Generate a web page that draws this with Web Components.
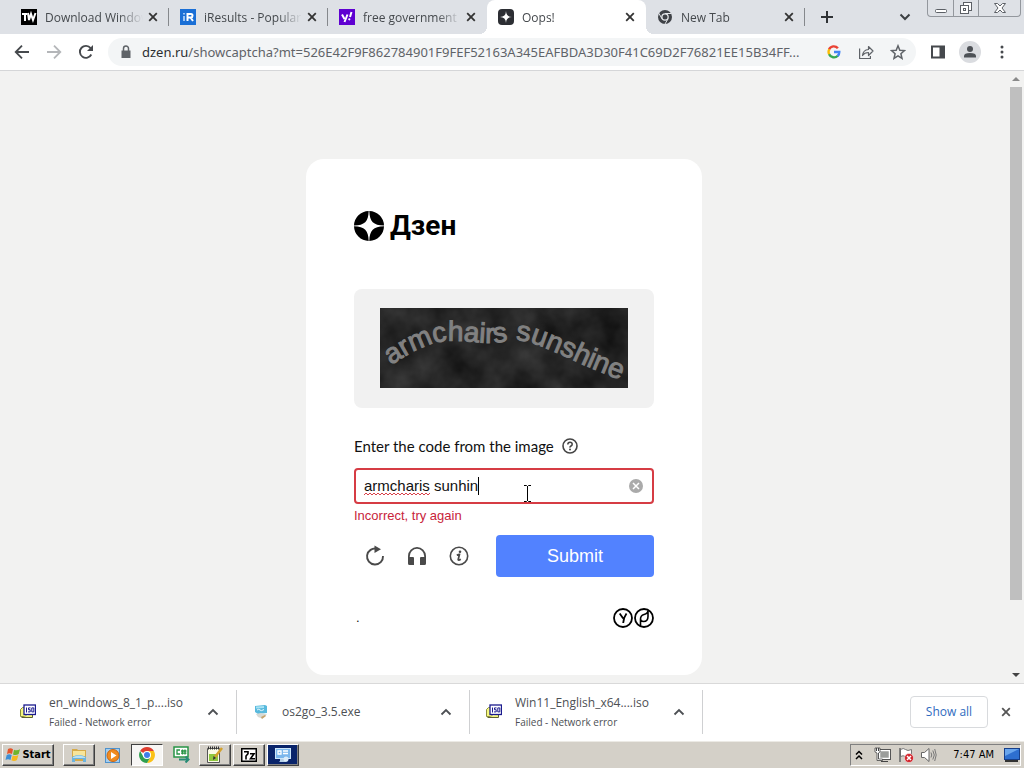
<!DOCTYPE html>
<html lang="en">
<head>
<meta charset="utf-8">
<meta name="viewport" content="width=device-width, initial-scale=1">
<title>Oops!</title>
<style>
    html, body {
        height: 100%;
        margin: 0;
    }
    body {
        display: flex;
        flex-direction: column;
        overflow: hidden;
        font-family: "Open Sans", "Noto Sans", sans-serif;
        font-size: 12px;
        color: #3c4043;
        background: #fff;
    }
    page-view {
        flex: 1;
        min-height: 0;
    }
</style>
</head>
<body>
    <tab-strip>
        <browser-tab icon="tw">Download Windows</browser-tab>
        <browser-tab icon="ir">iResults - Popular</browser-tab>
        <browser-tab icon="yahoo">free government cell</browser-tab>
        <browser-tab icon="zen" active>Oops!</browser-tab>
        <browser-tab icon="chromeGrey">New Tab</browser-tab>
    </tab-strip>
    <address-bar></address-bar>
    <page-view>
        <captcha-card></captcha-card>
    </page-view>
    <download-bar>
        <download-item icon="iso" status="Failed - Network error">en_windows_8_1_p....iso</download-item>
        <download-item icon="installer">os2go_3.5.exe</download-item>
        <download-item icon="iso" status="Failed - Network error">Win11_English_x64....iso</download-item>
    </download-bar>
    <task-bar></task-bar>

<script>
const svg = (w, h, body, box) =>
    `<svg width="${w}" height="${h}" viewBox="${box || `0 0 ${w} ${h}`}" aria-hidden="true">${body}</svg>`;

const chromeLogo = (red, yellow, green, blue) => `
    <path fill="${red}" d="M8 8 1.1 4A8 8 0 0 1 14.9 4H8z"/>
    <path fill="${yellow}" d="M8 8V4h6.9A8 8 0 0 1 8 16l3.5-6z"/>
    <path fill="${green}" d="M8 8l3.5 2L8 16A8 8 0 0 1 1.1 4l3.4 6z"/>
    <circle cx="8" cy="8" r="4" fill="#fff"/>
    <circle cx="8" cy="8" r="3" fill="${blue}"/>`;

const ICONS = {
    // tab favicons
    tw: svg(16, 16, `<rect width="16" height="16" fill="#000"/><path fill="none" stroke="#fff" stroke-width="2" d="M1 5h5M4 4v8M7 4l1 7 2-6 2 6 2.500-7"/>`),
    ir: svg(16, 16, `<rect width="16" height="16" fill="#1a6fd6"/><path stroke="#9cc5f5" stroke-width="2" d="M4 7v5M4 4v1.500"/><path fill="none" stroke="#fff" stroke-width="2" d="M7.500 12V5H11q1.500 0 1.500 1.700T11 8.500H8M10.500 8.500l2.500 3.500"/>`),
    yahoo: svg(16, 16, `<rect width="16" height="16" fill="#5f01d1"/><path fill="none" stroke="#fff" stroke-width="2" d="M3 5.500l2.500 4.500M8.500 5.500l-3 7.500M12.500 3l-1.500 5"/><circle cx="10.300" cy="10.300" r="1.100" fill="#fff"/>`),
    zen: svg(16, 16, `<rect width="16" height="16" rx="4" fill="#2c2e33"/><path fill="#fff" d="M8 2q.2 5.800 6 6-5.800.2-6 6-.2-5.800-6-6 5.800-.2 6-6z"/>`),
    chromeGrey: svg(16, 16, `<circle cx="8" cy="8" r="7" fill="#3f4247"/><path stroke="#e3e5e8" stroke-width="1" d="M8 4.500h6.300M5 9.800 1.800 4.200M11 9.800 8 15"/><circle cx="8" cy="8" r="3.800" fill="#e3e5e8"/><circle cx="8" cy="8" r="2.500" fill="#3f4247"/>`),

    // browser chrome
    close: svg(16, 16, `<path stroke="currentColor" stroke-width="1.800" d="M4.200 4.200l7.600 7.600M11.800 4.200l-7.600 7.600"/>`),
    plus: svg(16, 16, `<path stroke="currentColor" stroke-width="2" d="M8 2v12M2 8h12"/>`),
    chevronDown: svg(14, 14, `<path fill="none" stroke="currentColor" stroke-width="2" d="M2.500 4.500 7 9l4.500-4.500"/>`),
    chevronUp: svg(14, 14, `<path fill="none" stroke="currentColor" stroke-width="1.800" d="M2.500 9.500 7 5l4.500 4.500"/>`),
    back: svg(16, 16, `<path fill="none" stroke="currentColor" stroke-width="1.800" d="M15 8H2M8 1.700 1.700 8 8 14.300"/>`),
    forward: svg(16, 16, `<path fill="none" stroke="currentColor" stroke-width="1.800" d="M1 8h13M8 1.700 14.300 8 8 14.300"/>`),
    reload: svg(16, 16, `<path fill="none" stroke="currentColor" stroke-width="1.900" d="M13.300 10.500A6 6 0 1 1 12.600 4.100"/><path fill="currentColor" d="M15 1v6H9z"/>`),
    lock: svg(16, 16, `<path fill="currentColor" d="M3.500 6.500h9V14h-9z"/><path fill="none" stroke="currentColor" stroke-width="1.500" d="M5.500 7V4.500a2.500 2.500 0 0 1 5 0V7"/>`),
    google: svg(14, 14, `<g fill="none" stroke-width="2.400"><path stroke="#ea4335" d="M2 4.400A5.300 5.300 0 0 1 10.900 3.300"/><path stroke="#fbbc05" d="M2.300 9.500a5.300 5.300 0 0 1 0-5.200"/><path stroke="#34a853" d="M10.800 10.700A5.300 5.300 0 0 1 2.100 9.200"/><path stroke="#4285f4" d="M7 7h5.300a5.300 5.300 0 0 1-1.700 4"/></g>`),
    share: svg(16, 16, `<g fill="none" stroke="currentColor" stroke-width="1.200"><path d="M1.600 4.500v10h10.800V12"/><path stroke-linejoin="round" d="M4.500 11.500q.5-5.500 6-6V2.500l4.500 4.500-4.500 4.500V8.500q-4 0-6 3z"/></g>`),
    star: svg(16, 16, `<path fill="none" stroke="currentColor" stroke-width="1.500" d="M8 1.800l1.800 4.400 4.700.4-3.600 3.100 1.100 4.600L8 11.800l-4 2.500 1.100-4.600L1.500 6.600l4.700-.4z"/>`),
    panel: svg(16, 16, `<path fill="currentColor" d="M1 1.500h14v13H1zM3 3.500v9h6.500v-9z" fill-rule="evenodd"/>`),
    avatar: svg(24, 24, `<circle cx="12" cy="12" r="11" fill="#dadce0"/><circle cx="12" cy="9" r="3" fill="#4d5156"/><path fill="#4d5156" d="M6 17.500V16q0-3 6-3t6 3v1.500z"/>`),
    dots: svg(16, 16, `<g fill="currentColor"><circle cx="8" cy="3" r="1.500"/><circle cx="8" cy="8" r="1.500"/><circle cx="8" cy="13" r="1.500"/></g>`),
    minimize: svg(14, 14, `<rect x="1.500" y="8.500" width="11" height="3" rx="1" fill="#fff" stroke="#5c6066"/>`),
    restore: svg(14, 14, `<g fill="#fff" stroke="#5c6066"><rect x="4.500" y="1.500" width="8" height="8"/><rect x="1.500" y="4.500" width="8" height="8"/><rect x="4.500" y="7.500" width="2" height="2"/></g>`),
    winClose: svg(14, 14, `<path fill="#fff" stroke="#5c6066" d="M1.500 2.500h3L7 5l2.500-2.500h3L9 7l3.500 4.500h-3L7 9l-2.500 2.500h-3L5 7z"/>`),

    // captcha form
    zenLogo: svg(32, 32, `<path d="M14.700 1A15 15 0 0 0 0 15.600C10.800 15.200 14.300 11.700 14.700 1zM15.300 1A15 15 0 0 1 30 15.600C19.200 15.200 15.700 11.700 15.300 1zM14.700 31A15 15 0 0 1 0 16.300C10.800 16.700 14.300 20.300 14.700 31zM15.300 31A15 15 0 0 0 30 16.300C19.200 16.700 15.700 20.300 15.300 31z"/>`),
    help: svg(16, 16, `<g fill="none" stroke="#444"><circle cx="8" cy="8" r="7" stroke-width="1.600"/><path stroke-width="1.500" d="M5.800 6.600q0-2.300 2.200-2.300t2.200 2q0 1.100-1.200 1.700T8 9.700"/></g><circle cx="8" cy="11.600" r="1" fill="#444"/>`),
    clear: svg(16, 16, `<circle cx="8" cy="8" r="7" fill="#aaa"/><path stroke="#fff" stroke-width="1.500" d="M5 5l6 6M11 5l-6 6"/>`),
    refresh: svg(24, 24, `<path fill="none" stroke="currentColor" stroke-width="1.900" d="M14 4.800A8 8 0 1 0 20 12"/><path fill="currentColor" d="M11.500 1.500l6.500 3.800-6.500 3.700z"/>`),
    headphones: svg(24, 24, `<path fill="none" stroke="currentColor" stroke-width="1.800" d="M3.900 14v-2a8.100 8.100 0 0 1 16.200 0v2"/><path fill="currentColor" d="M3 13h5q1 0 1 1v7H4.500Q3 21 3 19.500zM21 13h-5q-1 0-1 1v7h4.500q1.500 0 1.500-1.500z"/>`),
    info: svg(24, 24, `<circle cx="12" cy="12" r="8.700" fill="none" stroke="currentColor" stroke-width="1.600"/><circle cx="13" cy="7.700" r="1.300" fill="currentColor"/><path fill="none" stroke="currentColor" stroke-width="1.700" d="M9.800 11.200q2-1 2.700-.8l-1.300 5.100q-.2 1.300 2.600-.3"/>`),
    partners: svg(42, 20, `<g fill="none" stroke="#000" stroke-width="1.800"><circle cx="11" cy="10" r="9"/><circle cx="32" cy="10" r="9"/><path d="M7.700 5.500l3.500 5M14.500 5.500q-3 4-3.300 9.500"/><path stroke-width="1.600" d="M36 2.500v6q0 5-4.500 5-3 0-3-2.500 0-3.500 3.500-4.500 4-1.200 4-4M28.500 11v7"/></g>`),

    // downloads
    iso: svg(16, 16, `<path fill="#f6f87e" stroke="#8a8d3c" d="M.5 12.500V5.500L2.500 3.500H6v9z"/><path fill="#f6f87e" stroke="#5f6130" d="M1.500 13.500h11V10"/><rect x="4" y="1" width="11.500" height="9.500" fill="#fff" stroke="#1b1b8e" stroke-width="1.300"/><path fill="none" stroke="#1b1b8e" d="M6.500 3.500v5M10.500 3.900H8.500v1.800h1.700v2.200H8M11.800 3.900h2v4h-2z"/>`),
    installer: svg(16, 16, `<path fill="#58b9dd" d="M2 2l10-1 2 1v7l-9 1-3-2z"/><path fill="#a7e2f3" d="M3 2.500l8-.5v2l-8 .5z"/><path fill="none" stroke="#e9fbff" d="M4 6q2-1.500 3 0t4-.5"/><path fill="#d7d9d4" d="M3 10l5-1 6 1.500-5 4L5 13z"/><path fill="#c6a36c" d="M8 13l4-2 1 1-4 3z"/>`),

    // taskbar
    windows: svg(17, 17, `<path fill="#e5552b" d="M3 3q2.500-1.500 5 .2L7 8q-2.500-1.500-5 0z"/><path fill="#6fb52c" d="M9 3.700q3 1.500 6-.5L13.700 8q-3 1.800-5.700.4z"/><path fill="#3c8fd6" d="M1.700 9q2.500-1.500 5 0l-1.200 5q-2.500-1.500-5 0z"/><path fill="#f6b91d" d="M7.700 9.400q3 1.500 5.700-.3L12 14q-2.700 1.700-5.600.3z"/>`),
    explorer: svg(16, 16, `<path fill="#d6aa49" d="M1 2h5l1 1h8v11H1z"/><path fill="#f8e59a" d="M2 4h12v5H2z"/><path fill="#6bb4df" d="M1 10q7-4 14 0v5h-3v-3H4v3H1z"/><path fill="#b9e0f4" d="M2 10q6-3 12 0v1H2z"/>`),
    media: svg(16, 16, `<path fill="#4f92cc" d="M0 1h15v15H0z"/><path fill="#a5cdec" d="M1 2h13v13H1z"/><circle cx="8" cy="8.500" r="6" fill="#f08b20" stroke="#c96512"/><path fill="#fff" d="M6 5l5.500 3.500L6 12z"/>`),
    chrome: svg(16, 16, chromeLogo('#df3e2f', '#fbc116', '#2f9f4f', '#3f7fe8')),
    csharp: svg(17, 17, `<rect x="1" y="1" width="14" height="10" fill="#fff" stroke="#279445" stroke-width="1.500"/><path fill="none" stroke="#279445" stroke-width="1.300" d="M7 4H4v4h3M9.500 3.500v5M12 3.500v5M8 5h5.500M8 7.200h5.500"/><path fill="none" stroke="#278b75" stroke-width="2" d="M6 13.500h9M12.500 10.500l3 3-3 3"/>`),
    notepad: svg(18, 18, `<path fill="#fbfbe6" stroke="#555" d="M1.500 2.500h12v14h-12z"/><path stroke="#333" stroke-dasharray="1 1" stroke-width="3" d="M2 2h11"/><path fill="#8fc83e" d="M3 8h9v7H3z"/><path stroke="#d3a12c" stroke-width="2.500" d="M9 11l7-9"/><path fill="#333" d="M7 14l.5-4 2.500 2z"/>`),
    sevenZip: svg(16, 16, `<rect y="1" width="16" height="14" fill="#000"/><rect x="1.500" y="2.500" width="13" height="11" fill="#fff"/><path fill="none" stroke="#000" stroke-width="1.600" d="M3 4.700h4v2L5 9v3.500M9 6.700h4L9.500 11.700H14"/>`),
    server: svg(16, 16, `<rect x=".5" y="1.500" width="15" height="10" fill="#7bb6ec" stroke="#cde6fa"/><path fill="none" stroke="#fff" stroke-width="1.300" d="M3 4h3v3H3zM8 4h5M8 6.500h5"/><path fill="#b6cfe5" d="M5 12h6v2l2 1H4l1-1z"/><circle cx="11" cy="12" r="2.500" fill="#dcecfa"/>`),
    trayArrows: svg(8, 12, `<path fill="none" stroke="#000" stroke-width="1.500" d="M1 5.500 4 2.500l3 3M1 10 4 7l3 3"/>`),
    network: svg(18, 16, `<rect x="5.500" y="3.500" width="10" height="8" fill="#9b9d9b" stroke="#fff" stroke-width="1.500"/><rect x="4.500" y="2.500" width="12" height="10" fill="none" stroke="#555"/><path fill="#fff" stroke="#444" stroke-width=".8" d="M1 1h5v4L4.500 6v6h4v1.500H3V6L1 5z"/><path stroke="#444" d="M2.500 1v3M4.500 1v3M7 14.500h7"/>`),
    flag: svg(16, 16, `<path fill="#fff" stroke="#777" d="M2.500 2.500q3-2 5 0t6 0v7q-3.500 1.500-6 0t-5 0z"/><path stroke="#666" stroke-width="1.500" d="M2 1v14"/><circle cx="11" cy="11" r="4.500" fill="#d2232a" stroke="#fff" stroke-width=".5"/><path stroke="#fff" stroke-width="1.500" d="M9 9l4 4M13 9l-4 4"/>`),
    speaker: svg(17, 16, `<path fill="#fff" stroke="#666" d="M1.500 5.500h3L9 1.500v13L4.500 10.500h-3z"/><path fill="none" stroke="#777" d="M11 5.500q1.500 2.500 0 5M12.800 3.500q3 4.500 0 9M14.700 2q3 6 0 12"/>`),
    desktop: svg(16, 14, `<rect x=".5" y=".5" width="15" height="11" fill="#2e6fd0" stroke="#173f8a"/><path fill="#69a5ed" d="M1 1h14L1 8z"/><path fill="#333" d="M1 12h13v2H1z"/>`)
};

// Base class: puts the shared reset, the styles and the markup in an open shadow root
class ShadowElement extends HTMLElement {
    constructor() {
        super();
        this.attachShadow({ mode: 'open' });
    }

    connectedCallback() {
        const template = document.createElement('template');
        template.innerHTML = `
            <style>
                *, :host { box-sizing: border-box; }
                svg { display: block; flex: none; }
                button {
                    display: flex;
                    align-items: center;
                    justify-content: center;
                    flex: none;
                    margin: 0;
                    padding: 0;
                    border: 0;
                    background: none;
                    color: inherit;
                    font: inherit;
                }
                input { font: inherit; color: inherit; }
                ${this.styles()}
            </style>
            ${this.markup()}
        `;
        this.shadowRoot.replaceChildren(template.content.cloneNode(true));
    }
}

class BrowserTab extends ShadowElement {
    styles() {
        return `
            :host {
                position: relative;
                display: flex;
                align-items: center;
                flex: 0 1 auto;
                width: 159px;
                min-width: 0;
                height: 34px;
                padding-left: 11px;
                border-radius: 8px 8px 0 0;
                color: #45494d;
            }
            .title {
                flex: 1;
                justify-content: flex-start;
                min-width: 0;
                height: 34px;
                gap: 8px;
            }
            .text {
                flex: 1;
                overflow: hidden;
                white-space: nowrap;
                text-align: left;
                mask-image: linear-gradient(to right, #000 calc(100% - 24px), transparent);
            }
            .close { width: 16px; height: 16px; margin: 0 7px 0 2px; color: #333; }
            .line { width: 1px; height: 18px; background: #85888c; }
            :host([active]) { background: #fff; }
            :host([active]) .line, :host(.before-active) .line { background: transparent; }
            :host([active])::before, :host([active])::after {
                content: "";
                position: absolute;
                bottom: 0;
                width: 8px;
                height: 8px;
            }
            :host([active])::before { left: -8px; background: radial-gradient(circle at 0 0, transparent 8px, #fff 8px); }
            :host([active])::after { right: -8px; background: radial-gradient(circle at 100% 0, transparent 8px, #fff 8px); }
        `;
    }

    markup() {
        if (this.nextElementSibling && this.nextElementSibling.hasAttribute('active')) {
            this.classList.add('before-active');
        }
        return `
            <button class="title">${ICONS[this.getAttribute('icon')]}<span class="text"><slot></slot></span></button>
            <button class="close" aria-label="Close tab">${ICONS.close}</button>
            <span class="line"></span>
        `;
    }
}

class TabStrip extends ShadowElement {
    styles() {
        return `
            :host {
                display: flex;
                align-items: center;
                flex: none;
                height: 34px;
                padding: 0 3px 0 10px;
                background: #dee1e6;
            }
            .tabs { display: flex; min-width: 0; }
            .new { width: 28px; height: 28px; margin-left: 8px; color: #2f3235; }
            .search { width: 28px; height: 28px; margin: 0 8px 0 auto; color: #3c4043; }
            .window {
                display: flex;
                align-self: flex-start;
                height: 17px;
                border: 1px solid #93979d;
                border-top: 0;
                border-radius: 0 0 4px 4px;
            }
            .window button { width: 25px; }
            .window button + button { border-left: 1px solid #93979d; }
            .window button:last-child { width: 42px; }
        `;
    }

    markup() {
        return `
            <div class="tabs"><slot></slot></div>
            <button class="new" aria-label="New tab">${ICONS.plus}</button>
            <button class="search" aria-label="Search tabs">${ICONS.chevronDown}</button>
            <div class="window">
                <button aria-label="Minimize">${ICONS.minimize}</button>
                <button aria-label="Restore">${ICONS.restore}</button>
                <button aria-label="Close">${ICONS.winClose}</button>
            </div>
        `;
    }
}

class AddressBar extends ShadowElement {
    styles() {
        return `
            :host {
                display: flex;
                align-items: center;
                flex: none;
                height: 37px;
                padding: 0 6px;
                border-bottom: 1px solid #d5d6d8;
                background: #fff;
                color: #5f6368;
            }
            button { width: 32px; height: 28px; }
            .dark { color: #46494d; }
            .off { color: #b4b6b9; }
            .box {
                display: flex;
                align-items: center;
                flex: 1;
                min-width: 0;
                height: 28px;
                margin: 0 6px;
                padding: 0 2px 0 10px;
                border-radius: 14px;
                background: #f3f5f6;
            }
            label {
                display: flex;
                align-items: center;
                flex: 1;
                min-width: 0;
                font-family: "Noto Sans", "Open Sans", sans-serif;
                font-size: 13px;
                line-height: 20px;
            }
            .host { margin-left: 8px; color: #2b2e31; }
            input {
                flex: 1;
                min-width: 0;
                padding: 0;
                border: 0;
                outline: 0;
                background: none;
            }
        `;
    }

    markup() {
        return `
            <button class="dark" aria-label="Back">${ICONS.back}</button>
            <button class="off" aria-label="Forward">${ICONS.forward}</button>
            <button class="dark" aria-label="Reload">${ICONS.reload}</button>
            <div class="box">
                <label>${ICONS.lock}<span class="host">dzen.ru</span><input type="text" value="/showcaptcha?mt=526E42F9F862784901F9FEF52163A345EAFBDA3D30F41C69D2F76821EE15B34FF..." spellcheck="false"></label>
                <button aria-label="Search with Google">${ICONS.google}</button>
                <button aria-label="Share">${ICONS.share}</button>
                <button aria-label="Bookmark">${ICONS.star}</button>
            </div>
            <button class="dark" aria-label="Side panel">${ICONS.panel}</button>
            <button aria-label="Profile">${ICONS.avatar}</button>
            <button class="dark" aria-label="Menu">${ICONS.dots}</button>
        `;
    }
}

class PageView extends ShadowElement {
    styles() {
        return `
            :host { display: flex; background: #f2f2f1; }
            main {
                display: flex;
                justify-content: center;
                align-items: flex-start;
                flex: 1;
                min-width: 0;
                padding-top: 88px;
                overflow: hidden;
            }
            .scroll {
                display: flex;
                flex-direction: column;
                align-items: center;
                width: 16px;
                padding: 6px 0;
                gap: 6px;
            }
            .thumb { flex: 0 1 513px; width: 12px; background: #bfbfbf; }
            .down { margin-top: auto; }
        `;
    }

    markup() {
        return `
            <main><slot></slot></main>
            <div class="scroll">
                ${svg(8, 4, '<path fill="#8a8a8a" d="M0 4l4-4 4 4z"/>')}
                <div class="thumb"></div>
                <div class="down">${svg(8, 4, '<path fill="#444" d="M0 0l4 4 4-4z"/>')}</div>
            </div>
        `;
    }
}

class CaptchaImage extends ShadowElement {
    styles() {
        return `
            :host {
                display: flex;
                justify-content: center;
                padding: 19px 0 20px;
                border-radius: 8px;
                background: #f1f1f1;
            }
            svg { overflow: visible; }
            text {
                font-family: "Liberation Sans", Arial, sans-serif;
                font-size: 28px;
                fill: #818181;
                stroke: #818181;
                stroke-width: 1;
            }
        `;
    }

    markup() {
        return `
            <svg width="248" height="80" viewBox="0 0 248 80" role="img">
                <defs>
                    <filter id="clouds" x="0" y="0" width="1" height="1" color-interpolation-filters="sRGB">
                        <feTurbulence type="fractalNoise" baseFrequency="0.024" numOctaves="4" seed="7"/>
                        <feColorMatrix values="0.25 0 0 0 0.02  0.25 0 0 0 0.02  0.25 0 0 0 0.02  0 0 0 0 1"/>
                    </filter>
                    <path id="wave" d="M11 57C28 46 46 35 66 33C84 32 96 35 112 35C124 34 132 31 145 33C162 37 188 50 206 58C222 65 236 70 258 79"/>
                </defs>
                <rect width="248" height="80" fill="#222"/>
                <rect width="248" height="80" filter="url(#clouds)"/>
                <text><textPath href="#wave">armchairs sunshine</textPath></text>
            </svg>
        `;
    }
}

class CaptchaCard extends ShadowElement {
    styles() {
        return `
            :host {
                display: block;
                width: 396px;
                padding: 51px 48px 47px;
                border-radius: 18px;
                background: #fff;
                color: #111;
                font-family: Lato, "Open Sans", sans-serif;
                font-size: 15px;
            }
            .logo {
                display: flex;
                align-items: center;
                gap: 4px;
                height: 32px;
                margin-bottom: 47px;
                color: #000;
                font: bold 28px/32px Roboto, "Open Sans", sans-serif;
            }
            .question {
                display: flex;
                align-items: center;
                gap: 8px;
                margin: 26px 0 10px;
                line-height: 24px;
            }
            .help { width: 16px; height: 16px; }
            .field {
                position: relative;
                display: flex;
                align-items: center;
                height: 36px;
                padding: 0 8px;
                border: 2px solid #d63c44;
                border-radius: 4px;
            }
            .field input {
                flex: 1;
                min-width: 0;
                padding: 0;
                border: 0;
                outline: 0;
                background: none;
                font: 15px/24px "Liberation Sans", Arial, sans-serif;
            }
            .squiggle { position: absolute; left: 8px; top: 22px; }
            .caret { position: absolute; left: 122px; top: 7px; width: 1px; height: 18px; background: #000; }
            .pointer { position: absolute; left: 167px; top: 15px; }
            .error {
                margin: 4px 0 11px;
                color: #c8243b;
                font: 13px/16px "Liberation Sans", Arial, sans-serif;
            }
            .actions { display: flex; color: #4a4a4a; }
            .actions button { width: 42px; height: 42px; }
            .actions .submit {
                flex: 1;
                margin-left: 16px;
                border-radius: 4px;
                background: #5282ff;
                color: #fff;
                font: 18px/24px "Liberation Sans", Arial, sans-serif;
            }
            .foot {
                display: flex;
                align-items: center;
                justify-content: space-between;
                height: 20px;
                margin-top: 31px;
                padding-left: 2px;
                font: 13px/16px "Liberation Sans", Arial, sans-serif;
            }
        `;
    }

    markup() {
        return `
            <div class="logo">${ICONS.zenLogo}<span>Дзен</span></div>
            <captcha-image></captcha-image>
            <div class="question">
                <label for="code">Enter the code from the image</label>
                <button class="help" aria-label="Help">${ICONS.help}</button>
            </div>
            <div class="field">
                <input id="code" type="text" value="armcharis sunhin" spellcheck="false" autocomplete="off">
                <button aria-label="Clear">${ICONS.clear}</button>
                <svg class="squiggle" width="66" height="4" aria-hidden="true">
                    <defs><pattern id="zigzag" width="4" height="4" patternUnits="userSpaceOnUse"><path fill="none" stroke="#d8414a" d="M0 3l2-2 2 2"/></pattern></defs>
                    <rect width="66" height="4" fill="url(#zigzag)"/>
                </svg>
                <span class="caret"></span>
                <svg class="pointer" width="9" height="17" aria-hidden="true"><path fill="none" stroke="#000" d="M1 .5h2.500l1 1 1-1H8M4.500 1v15M1 16.500h2.500l1-1 1 1H8"/></svg>
            </div>
            <div class="error">Incorrect, try again</div>
            <div class="actions">
                <button aria-label="Another code">${ICONS.refresh}</button>
                <button aria-label="Listen">${ICONS.headphones}</button>
                <button aria-label="About">${ICONS.info}</button>
                <button class="submit">Submit</button>
            </div>
            <div class="foot"><span>.</span>${ICONS.partners}</div>
        `;
    }
}

class DownloadItem extends ShadowElement {
    styles() {
        return `
            :host {
                display: flex;
                align-items: center;
                flex: 0 1 233px;
                min-width: 0;
                color: #4d5054;
            }
            .file {
                flex: 1;
                justify-content: flex-start;
                min-width: 0;
                gap: 13px;
                padding-left: 16px;
                text-align: left;
                white-space: nowrap;
            }
            .name { font-size: 12px; line-height: 20px; }
            .status { font-size: 10px; line-height: 18px; }
            .more { width: 32px; height: 32px; margin-right: 7px; }
            .line { width: 1px; height: 44px; background: #cfd0d2; }
        `;
    }

    markup() {
        const status = this.getAttribute('status');
        return `
            <button class="file">
                ${ICONS[this.getAttribute('icon')]}
                <div>
                    <div class="name"><slot></slot></div>
                    ${status ? `<div class="status">${status}</div>` : ''}
                </div>
            </button>
            <button class="more" aria-label="More options">${ICONS.chevronUp}</button>
            <span class="line"></span>
        `;
    }
}

class DownloadBar extends ShadowElement {
    styles() {
        return `
            :host {
                display: flex;
                align-items: center;
                flex: none;
                height: 58px;
                padding: 0 8px 2px 4px;
                border-top: 1px solid #d9d9d9;
                background: #fff;
            }
            .items { display: flex; flex: 1; min-width: 0; }
            .all {
                width: 78px;
                height: 32px;
                border: 1px solid #d8dadd;
                border-radius: 4px;
                color: #2f6bc0;
                font-weight: 500;
            }
            .close { width: 20px; height: 20px; margin-left: 8px; color: #555; }
        `;
    }

    markup() {
        return `
            <div class="items"><slot></slot></div>
            <button class="all">Show all</button>
            <button class="close" aria-label="Close">${ICONS.close}</button>
        `;
    }
}

class TaskBar extends ShadowElement {
    styles() {
        return `
            :host {
                display: flex;
                align-items: center;
                flex: none;
                height: 27px;
                padding: 0 3px 1px 2px;
                border-top: 1px solid #eceae5;
                background: #d4d0c8;
                color: #000;
                font: 11px/16px "DejaVu Sans Condensed", "DejaVu Sans", sans-serif;
            }
            .apps { display: flex; flex: 1; gap: 2px; }
            .apps button { width: 32px; height: 22px; }
            .apps .raised, .start {
                border: 1px solid;
                border-color: #fff #404040 #404040 #fff;
                box-shadow: inset -1px -1px #808080;
            }
            .apps .pressed {
                border: 1px solid;
                border-color: #404040 #fff #fff #404040;
                background: #f7f6f4;
            }
            .apps .selected { background: #0a246a; }
            .start { width: 52px; height: 22px; margin-right: 9px; font-weight: bold; }
            .tray {
                display: flex;
                align-items: center;
                gap: 6px;
                height: 22px;
                padding: 0 0 0 4px;
                border: 1px solid;
                border-color: #808080 #fff #fff #808080;
            }
            .tray button:first-child { margin-right: 5px; }
            time { margin: 0 4px 0 10px; }
        `;
    }

    markup() {
        return `
            <button class="start">${ICONS.windows}Start</button>
            <div class="apps">
                <button class="raised" aria-label="Explorer">${ICONS.explorer}</button>
                <button aria-label="Media Player">${ICONS.media}</button>
                <button class="pressed" aria-label="Chrome">${ICONS.chrome}</button>
                <button aria-label="C#">${ICONS.csharp}</button>
                <button class="raised" aria-label="Notepad++">${ICONS.notepad}</button>
                <button class="raised" aria-label="7-Zip">${ICONS.sevenZip}</button>
                <button class="raised selected" aria-label="Server">${ICONS.server}</button>
            </div>
            <div class="tray">
                <button aria-label="Hidden icons">${ICONS.trayArrows}</button>
                <button aria-label="Network">${ICONS.network}</button>
                <button aria-label="Action center">${ICONS.flag}</button>
                <button aria-label="Volume">${ICONS.speaker}</button>
                <time datetime="07:47">7:47 AM</time>
                <button aria-label="Show desktop">${ICONS.desktop}</button>
            </div>
        `;
    }
}

customElements.define('browser-tab', BrowserTab);
customElements.define('tab-strip', TabStrip);
customElements.define('address-bar', AddressBar);
customElements.define('page-view', PageView);
customElements.define('captcha-image', CaptchaImage);
customElements.define('captcha-card', CaptchaCard);
customElements.define('download-item', DownloadItem);
customElements.define('download-bar', DownloadBar);
customElements.define('task-bar', TaskBar);
</script>
</body>
</html>
